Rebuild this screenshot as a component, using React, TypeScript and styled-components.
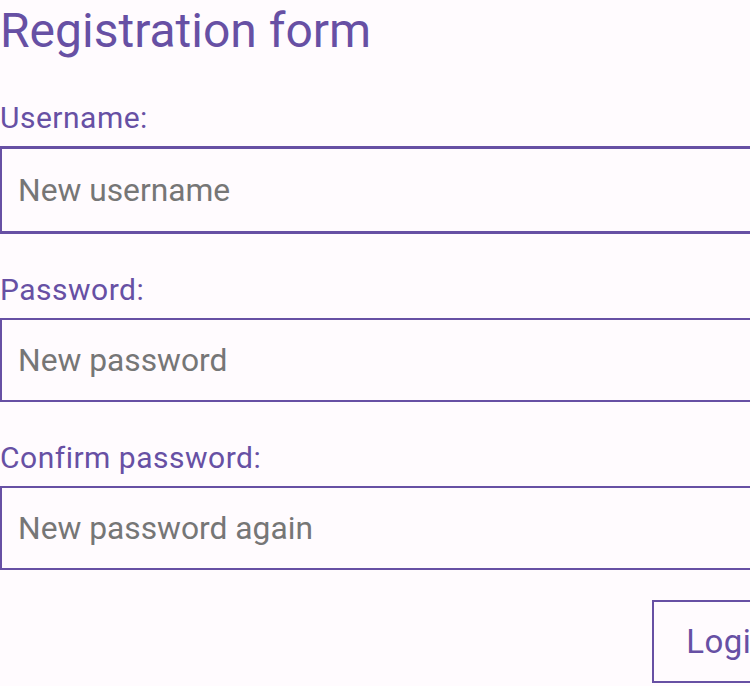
import React from "react";
import styled, { createGlobalStyle } from "styled-components";

const GlobalStyle = createGlobalStyle`
  html, body {
    margin: 0;
    padding: 0;
    background: #fffbfe;
    overflow: hidden;
  }
  body {
    font-family: Roboto, "Noto Sans", sans-serif;
  }
`;

const PRIMARY = "#6750a4";

const Form = styled.form`
  width: 804px;
  display: flex;
  flex-direction: column;
  color: ${PRIMARY};
`;

const Title = styled.h1`
  margin: 2px 0 40px;
  font-size: 48px;
  font-weight: 400;
  line-height: 58px;
  color: ${PRIMARY};
`;

const Field = styled.div`
  display: flex;
  flex-direction: column;
  margin-bottom: 38px;
`;

const Label = styled.label`
  font-size: 30px;
  line-height: 35px;
  letter-spacing: 0.5px;
  margin-bottom: 11px;
  color: ${PRIMARY};
`;

const Input = styled.input<{ $focused?: boolean }>`
  box-sizing: border-box;
  width: 100%;
  height: ${(p) => (p.$focused ? "88px" : "84px")};
  margin: 0;
  padding: 0 16px;
  border: ${(p) => (p.$focused ? "3px" : "2px")} solid ${PRIMARY};
  border-left-width: 2px;
  border-radius: 0;
  background: transparent;
  font-family: Roboto, sans-serif;
  font-size: 31.75px;
  color: #1c1b1f;
  outline: none;
  &::placeholder {
    color: #767676;
  }
`;

const Actions = styled.div`
  display: flex;
  justify-content: flex-end;
  margin-top: -8px;
`;

const Button = styled.button`
  box-sizing: border-box;
  height: 83px;
  padding: 0 32px;
  border: 2px solid ${PRIMARY};
  border-radius: 0;
  background: transparent;
  color: ${PRIMARY};
  font-family: Roboto, sans-serif;
  font-size: 33px;
  letter-spacing: 0.5px;
`;

export default function App() {
  return (
    <>
      <GlobalStyle />
      <Form onSubmit={(e) => e.preventDefault()}>
        <Title>Registration form</Title>
        <Field>
          <Label htmlFor="username">Username:</Label>
          <Input id="username" $focused placeholder="New username" />
        </Field>
        <Field>
          <Label htmlFor="password">Password:</Label>
          <Input id="password" type="password" placeholder="New password" />
        </Field>
        <Field>
          <Label htmlFor="confirm">Confirm password:</Label>
          <Input id="confirm" type="password" placeholder="New password again" />
        </Field>
        <Actions>
          <Button type="submit">Login</Button>
        </Actions>
      </Form>
    </>
  );
}
